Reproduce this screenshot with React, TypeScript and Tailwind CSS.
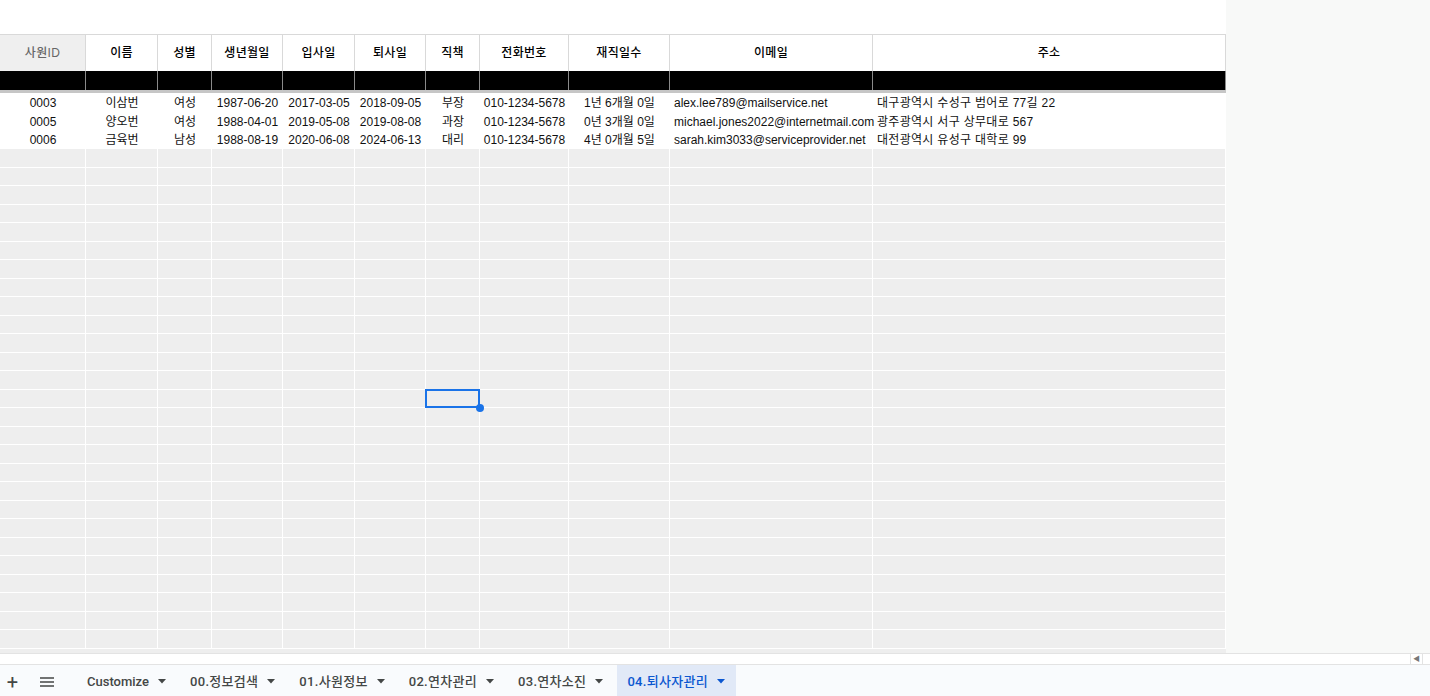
import React from 'react';

const COLS = 'grid grid-cols-[86px_72px_54px_71px_72px_71px_54px_89px_101px_203px_353px]';

const headers = ['사원ID', '이름', '성별', '생년월일', '입사일', '퇴사일', '직책', '전화번호', '재직일수', '이메일', '주소'];

const rows = [
    ['0003', '이삼번', '여성', '1987-06-20', '2017-03-05', '2018-09-05', '부장', '010-1234-5678', '1년 6개월 0일', 'alex.lee789@mailservice.net', '대구광역시 수성구 범어로 77길 22'],
    ['0005', '양오번', '여성', '1988-04-01', '2019-05-08', '2019-08-08', '과장', '010-1234-5678', '0년 3개월 0일', 'michael.jones2022@internetmail.com', '광주광역시 서구 상무대로 567'],
    ['0006', '금육번', '남성', '1988-08-19', '2020-06-08', '2024-06-13', '대리', '010-1234-5678', '4년 0개월 5일', 'sarah.kim3033@serviceprovider.net', '대전광역시 유성구 대학로 99'],
];

const tabs = ['Customize', '00.정보검색', '01.사원정보', '02.연차관리', '03.연차소진', '04.퇴사자관리'];

const font = { fontFamily: '"Liberation Sans", "Noto Sans CJK KR", sans-serif' };

const Caret = ({ color }: { color: string }) => (
    <svg width="8" height="5" viewBox="0 0 8 5">
        <path d="M0 0 L8 0 L4 4.5 Z" fill={color} />
    </svg>
);

export default function App() {
    const emptyRows = Array.from({ length: 27 }, (_, i) => i);

    return (
        <div className="w-[1430px] h-[696px] flex flex-col bg-white overflow-hidden" style={font}>
            <div className="flex h-[653px]">
                {/* Sheet */}
                <div className="w-[1226px] flex flex-col bg-white">
                    <div className="h-[34px]" />
                    {/* Header row */}
                    <div className={`${COLS} h-[37px] border-t border-[#d9d9d9]`}>
                        {headers.map((h, i) => (
                            <div
                                key={h}
                                className={`flex items-center justify-center text-[12px] border-r border-[#d9d9d9] tracking-[0.3px] font-medium ${
                                    i === 0 ? 'bg-[#efefef] text-[#666666]' : 'bg-white text-black'
                                }`}
                            >
                                {h}
                            </div>
                        ))}
                    </div>
                    {/* Black row */}
                    <div className={`${COLS} h-[19px] bg-black`}>
                        {headers.map((h) => (
                            <div key={h} className="border-r border-[#8a8a8a]" />
                        ))}
                    </div>
                    <div className="h-[3px] bg-[#c6c6c6]" />
                    {/* Data rows */}
                    {rows.map((r, ri) => (
                        <div key={ri} className={`${COLS} h-[18.7px] text-[12px] text-[#111]`}>
                            {r.map((c, ci) => (
                                <div
                                    key={ci}
                                    className={`flex items-center pt-[1px] whitespace-nowrap ${
                                        ci >= 9 ? 'justify-start pl-[4px]' : 'justify-center'
                                    } ${ci === 10 ? 'tracking-[0.3px]' : ''}`}
                                >
                                    {c}
                                </div>
                            ))}
                        </div>
                    ))}
                    {/* Empty gray rows */}
                    <div className="flex-1 bg-[#eeeeee] flex flex-col">
                        {emptyRows.map((i) => (
                            <div key={i} className={`${COLS} ${i % 2 === 0 ? 'h-[19px]' : 'h-[18px]'}`}>
                                {headers.map((h, ci) => (
                                    <div key={h} className={`relative border-r border-b border-white ${i === 13 && ci === 6 ? 'z-10' : ''}`}>
                                        {i === 13 && ci === 6 && (
                                            <>
                                                <div className="absolute -left-[1px] -top-[1px] -right-[1px] -bottom-[1px] border-2 border-[#1a73e8]" />
                                                <div className="absolute -right-[5px] -bottom-[5px] w-[8px] h-[8px] rounded-full bg-[#1a73e8]" />
                                            </>
                                        )}
                                    </div>
                                ))}
                            </div>
                        ))}
                    </div>
                </div>
                {/* Right empty panel */}
                <div className="flex-1 bg-[#f8f9f8]" />
            </div>

            {/* Horizontal scroll strip */}
            <div className="h-[12px] flex border-t border-b border-[#e3e3e3] bg-white">
                <div className="flex-1" />
                <div className="w-[12px] border-l border-[#e3e3e3] flex items-center justify-center text-[7px] text-[#777]">◀</div>
                <div className="w-[8px] border-l border-[#e3e3e3]" />
            </div>

            {/* Tab bar */}
            <div className="flex-1 bg-[#f9fbfd] flex items-stretch text-[13px] text-[#444746]" style={{ fontFamily: 'Roboto, "Noto Sans CJK KR", sans-serif' }}>
                <div className="w-[25px] flex items-center justify-center pt-[2px] text-[20px] leading-none">+</div>
                <div className="w-[44px] flex items-center justify-center pt-[2px]">
                    <svg width="14" height="10" viewBox="0 0 14 10">
                        <path d="M0 1 H14 M0 5 H14 M0 9 H14" stroke="#444746" strokeWidth="1.4" />
                    </svg>
                </div>
                <div className="w-[8px]" />
                <div className="flex gap-[3px]">
                    {tabs.map((t, i) => {
                        const active = i === tabs.length - 1;
                        return (
                            <div
                                key={t}
                                className={`flex items-center gap-[9px] pl-[10px] pr-[11px] pt-[2px] font-medium ${
                                    i > 0 ? 'tracking-[0.3px]' : ''
                                } ${active ? 'bg-[#e1e9f7] text-[#0b57d0]' : ''}`}
                            >
                                <span>{t}</span>
                                <Caret color={active ? '#0b57d0' : '#444746'} />
                            </div>
                        );
                    })}
                </div>
            </div>
        </div>
    );
}
